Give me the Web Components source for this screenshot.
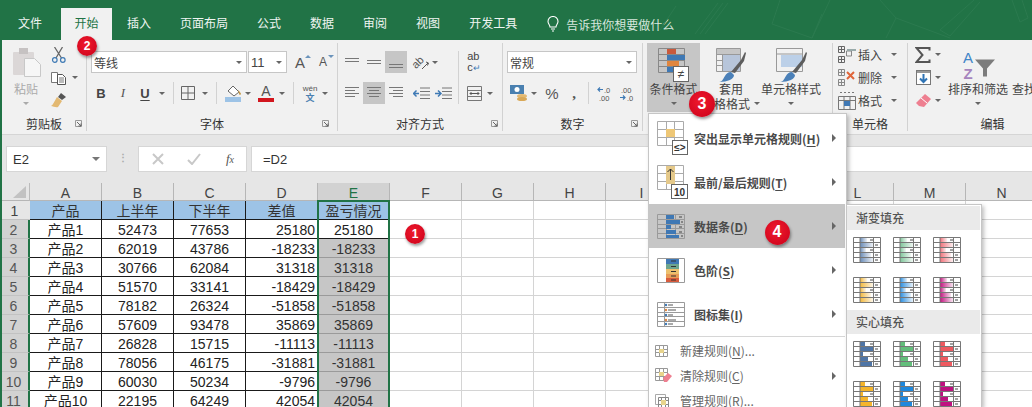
<!DOCTYPE html>
<html lang="zh"><head><meta charset="utf-8"><title>Excel</title>
<style>html,body{margin:0;padding:0;width:1032px;height:407px;overflow:hidden;background:#fff}</style>
</head><body>
<x-app></x-app>
<script>
const FONT='"Noto Sans CJK SC","Liberation Sans",sans-serif';
const svg=(w,h,b,vb)=>`<svg xmlns="http://www.w3.org/2000/svg" width="${w}" height="${h}" viewBox="${vb||`0 0 ${w} ${h}`}" style="display:block;flex:none">${b}</svg>`;
function grid(x,y,w,h,cols,rows,c){let d=`M${x} ${y}h${w}v${h}h${-w}z`;for(let i=1;i<cols;i++)d+=`M${x+Math.round(w*i/cols)} ${y}v${h}`;for(let i=1;i<rows;i++)d+=`M${x} ${y+Math.round(h*i/rows)}h${w}`;return `<path d="${d}" fill="none" stroke="${c}" stroke-width="1"/>`;}
const lines=(ys,x0s,x1s,c='#777')=>`<path d="${ys.map((y,i)=>`M${x0s[i]} ${y}H${x1s[i]}`).join('')}" stroke="${c}" fill="none"/>`;
const brush=(o)=>`<path d="M${o+12} 24l10-12 4-8 1 1-2 8-9 12z" fill="#5d5d5d"/><path d="M${o} 34c3 0 4-3 6-6 1-2 3-4 6-4l3 3c0 4-6 7-15 7z" fill="#4b80b8"/>`;
const I={
paste:svg(29,30,`<rect x="0" y="4" width="21" height="23" rx="1" fill="#dbd7d7"/><rect x="6" y="0" width="9" height="6" fill="#c6c2c2"/><path d="M11.5 10.5h10l6 6v12h-16z" fill="#f6f6f6" stroke="#c8c8c8"/>`),
cut:svg(16,16,`<path d="M3.5 0 10.5 11M11.5 0 5 11" stroke="#666" stroke-width="1.3" fill="none"/><circle cx="3.8" cy="13" r="2.3" fill="none" stroke="#3f7ab5" stroke-width="1.2"/><circle cx="11.8" cy="13" r="2.3" fill="none" stroke="#3f7ab5" stroke-width="1.2"/>`),
copy:svg(16,14,`<path d="M.5 1.5h6v10h-6z" fill="#fff" stroke="#777"/><path d="M6.5 3.5h5l3 3v7h-8z" fill="#fff" stroke="#555"/><path d="M8 7h5M8 9h5M8 11h5" stroke="#777"/>`),
painter:svg(16,15,`<path d="M10 0l5 4-4 3-4-3z" fill="#555"/><path d="M6 4l5 4-4 6c-2 1-5-1-7-1 2-1 3-4 6-9z" fill="#e3b972"/>`),
B:'<b style="font:bold 13px \'Liberation Sans\';color:#444">B</b>',
It:'<i style="font:italic 13px \'Liberation Serif\';color:#555">I</i>',
U:'<span style="font:bold 13px \'Liberation Sans\';color:#444;text-decoration:underline;text-underline-offset:2px">U</span>',
border:svg(14,14,`<path d="M.5.5h13v13H.5zM7 .5v13M.5 7h13" fill="none" stroke="#666"/>`),
fill:svg(17,18,`<path d="M3 7l5-5 6 6-5 4z" fill="#fff" stroke="#666"/><path d="M13 6c2 2 3 3 3 4s-2 1-2 0z" fill="#c59a49"/><rect x="0" y="13" width="16" height="5" fill="#9dc3e6"/>`),
fcolor:`<span style="display:block;width:16px;text-align:center;font:14px/14px 'Liberation Sans';color:#555;border-bottom:4px solid #d2161e">A</span>`,
wen:`<span style="display:block;text-align:center;font:8px/9px 'Liberation Sans';color:#555">wén<br><span style="font:bold 9px/9px 'Noto Sans CJK SC';color:#4a80b0">文</span></span>`,
grow:`<span style="font:15px 'Liberation Sans';color:#555;position:relative">A<span style="position:absolute;left:10px;top:1px;width:0;height:0;border:3px solid transparent;border-bottom:3px solid #6b93bb;border-top:0"></span></span>`,
shrink:`<span style="font:12px 'Liberation Sans';color:#555;position:relative">A<span style="position:absolute;left:9px;top:0;width:0;height:0;border:3px solid transparent;border-top:3px solid #6b93bb;border-bottom:0"></span></span>`,
aTop:svg(15,14,lines([3.5,6.5],[0,0],[14,14])),
aMid:svg(15,14,lines([5.5,8.5],[0,0],[14,14])),
aBot:svg(15,14,lines([9.5,12.5],[0,0],[14,14])),
aLeft:svg(15,14,lines([1.5,4.5,7.5,10.5],[0,0,0,0],[14,10,14,10])),
aCen:svg(15,14,lines([1.5,4.5,7.5,10.5],[0,2,0,2],[14,12,14,12])),
aRight:svg(15,14,lines([1.5,4.5,7.5,10.5],[0,4,0,4],[14,14,14,14])),
orient:svg(18,15,`<path d="M10 14l6-6M14 7l2.500 1-1 2.500" stroke="#555" fill="none"/><text x="0" y="11" font-family="Liberation Sans" font-size="11" fill="#555" transform="rotate(-45 6 8)">ab</text>`),
indL:svg(17,13,`<path d="M7 1h10M7 4.500h10M7 8h10M7 11.500h10" stroke="#777"/><path d="M6 6.500H1M3.500 3.500 .5 6.500l3 3" stroke="#3f7ab5" stroke-width="1.500" fill="none"/>`),
indR:svg(17,13,`<path d="M7 1h10M7 4.500h10M7 8h10M7 11.500h10" stroke="#777"/><path d="M0 6.500h5M3 3.500l3 3-3 3" stroke="#3f7ab5" stroke-width="1.500" fill="none"/>`),
wrap:`<span style="display:block;font:11px/11px 'Liberation Sans';color:#444">ab<br>c<span style="color:#3f7ab5;font-size:9px">↵</span></span>`,
merge:svg(15,15,`<path d="M.5.5h14v14H.5zM.5 4.500h14M.5 10.500h14" stroke="#777" fill="none"/><path d="M3 7.500h9M4.500 6 3 7.500 4.500 9M10.500 6 12 7.500 10.500 9" stroke="#555" fill="none"/>`),
currency:svg(17,17,`<rect x="0" y="0" width="14" height="9" fill="#4a80b0"/><circle cx="7" cy="4.500" r="2.500" fill="#fff"/><ellipse cx="12" cy="11" rx="5" ry="2" fill="#e3b972"/><ellipse cx="12" cy="14" rx="5" ry="2" fill="#d9a857"/>`),
pct:`<span style="font:15px 'Liberation Sans';color:#555">%</span>`,
comma:`<span style="font:bold 15px/14px 'Liberation Serif';color:#555">,</span>`,
incD:svg(15,15,`<path d="M6 3.500H1M3 1.500 1 3.500l2 2" stroke="#3f7ab5" stroke-width="1.200" fill="none"/><text x="7" y="7" font-family="Liberation Sans" font-size="7.500" fill="#555">.0</text><text x="2" y="14.500" font-family="Liberation Sans" font-size="7.500" fill="#555">.00</text>`),
decD:svg(15,15,`<text x="2" y="7" font-family="Liberation Sans" font-size="7.500" fill="#555">.00</text><path d="M1 11.500h5M4 9.500l2 2-2 2" stroke="#3f7ab5" stroke-width="1.200" fill="none"/><text x="8" y="14.500" font-family="Liberation Sans" font-size="7.500" fill="#555">.0</text>`),
cond:svg(31,34,`${grid(.5,.5,26,24,3,4,'#888')}<rect x="9" y="1" width="9" height="5" fill="#c9593c"/><rect x="9" y="7" width="18" height="5" fill="#3f78b4"/><rect x="9" y="13" width="12" height="5" fill="#e0863f"/><rect x="9" y="19" width="7" height="5" fill="#3f78b4"/><rect x="15.500" y="18.500" width="15" height="15" fill="#fff" stroke="#666"/><text x="23" y="30" text-anchor="middle" font-family="Liberation Sans" font-size="12" fill="#444">≠</text>`),
tblf:svg(30,34,`${grid(.5,.5,24,23,4,4,'#999')}<rect x="1" y="1" width="23" height="5" fill="#c6c6c6"/><rect x="7" y="7" width="17" height="16" fill="#b7c5da"/>`+brush(3)),
cellf:svg(31,34,`${grid(.5,.5,26,23,1,1,'#999')}<path d="M.5 6h26" stroke="#999"/><rect x="5" y="7" width="21" height="12" fill="#bcd0e8"/>`+brush(4)),
insert:svg(20,17,`${grid(.5,.5,6,6,2,2,'#666')}${grid(.5,10.500,6,6,2,2,'#666')}${grid(8.500,5,5,5,1,1,'#888')}<path d="M9 3h9v2H9z" fill="#9aa"/>`),
del:svg(20,17,`${grid(.5,.5,6,6,2,2,'#888')}${grid(.5,10.500,6,6,2,2,'#888')}<path d="M9 3l7 7M16 3l-7 7" stroke="#e0653a" stroke-width="2"/>`),
fmt:svg(18,18,`<path d="M.5 4.500h17v13H.5zM.5 8.500h17M6 4.500v13M12 4.500v13" stroke="#777" fill="none"/><path d="M2 .5h14" stroke="#777" stroke-dasharray="2 2"/><rect x="6" y="9" width="6" height="5" fill="#3f78b4"/>`),
sigma:svg(16,16,`<path d="M14.500 3.500V1H1.500l6 7-6 7h13v-2.500" fill="none" stroke="#555" stroke-width="2"/>`),
fillD:svg(15,15,`<rect x=".5" y=".5" width="14" height="14" fill="#fff" stroke="#777"/><rect x="1" y="1" width="13" height="2" fill="#999"/><path d="M7.500 4v8M4 8.500l3.500 3.500 3.500-3.500" stroke="#2f74b5" stroke-width="2" fill="none"/>`),
eraser:svg(15,13,`<path d="M9 0l6 5-7 8-5-1-3-3z" fill="#ee7f90"/><path d="M5 4l6 5" stroke="#fff"/>`),
sort:svg(38,33,`<text x="9" y="14" text-anchor="middle" font-family="Liberation Sans" font-size="15" fill="#3f86c8">A</text><text x="9" y="30" text-anchor="middle" font-family="Liberation Sans" font-weight="bold" font-size="15" fill="#a684bd">Z</text><path d="M16 11h20l-8 9v8h-4v-8z" fill="#7c7c7c"/>`),
find:svg(20,34,`<circle cx="11" cy="30" r="6" fill="#3f78b4"/>`),
x:svg(12,12,`<path d="M1 1l10 10M11 1 1 11" stroke="#c8c8c8" stroke-width="2"/>`),
check:svg(14,12,`<path d="M1 7l4 4 8-10" stroke="#c8c8c8" stroke-width="2" fill="none"/>`),
lamp:svg(12,16,`<path d="M3 11c0-2-2-3-2-5.500a5 5 0 0 1 10 0c0 2.500-2 3.500-2 5.500zM4 13h4M5 15h2" fill="none" stroke="#fff" stroke-width="1.100"/>`),
launch:svg(7,7,`<path d="M.5.5h6v6h-6z" fill="none" stroke="#999"/><path d="M2 2l4 4M6 3.500V6H3.500" stroke="#666" fill="none"/>`),
m1:svg(31,34,`${grid(.5,.5,26,24,3,3,'#aaa')}<rect x="9" y="8" width="9" height="8" fill="#eec776"/><rect x="15.500" y="19.500" width="15" height="14" fill="#fff" stroke="#666"/><text x="23" y="30" text-anchor="middle" font-family="Liberation Sans" font-size="10" fill="#333">≤&gt;</text>`),
m2:svg(31,34,`${grid(.5,.5,26,24,3,3,'#aaa')}<rect x="9" y="1" width="9" height="18" fill="#e5c98a"/><path d="M13.500 15V4M10.500 7l3-3 3 3" stroke="#333" fill="none"/><rect x="14.500" y="19.500" width="16" height="14" fill="#fff" stroke="#666"/><text x="22.500" y="30.500" text-anchor="middle" font-family="Liberation Sans" font-size="10" fill="#333">10</text>`),
m3:svg(28,25,`${grid(.5,.5,27,24,3,5,'#9a9a9a')}<rect x="9" y="1" width="8" height="4" fill="#3f78b4"/><rect x="9" y="6" width="14" height="4" fill="#3f78b4"/><rect x="9" y="11" width="5" height="4" fill="#3f78b4"/><rect x="9" y="16" width="10" height="4" fill="#3f78b4"/><rect x="9" y="21" width="13" height="3" fill="#3f78b4"/><path d="M22 3h3M24 8h2M22 13h3M22 18h3M24 22h2" stroke="#444"/>`),
m4:svg(28,25,`<path d="M.5.5h27v24H.5zM9.500.5v24M21.500.5v24" fill="none" stroke="#9a9a9a"/><rect x="9" y="1" width="13" height="5" fill="#3f78b4"/><rect x="9" y="6" width="13" height="5" fill="#6ea58e"/><rect x="9" y="11" width="13" height="5" fill="#ecc06e"/><rect x="9" y="16" width="13" height="4" fill="#e89c57"/><rect x="9" y="20" width="13" height="4" fill="#d95c3e"/><path d="M14 3h5M14 8.500h5M14 13.500h5M14 18h5M14 22h5" stroke="#333"/>`),
m5:svg(28,25,`${grid(.5,.5,27,24,1,5,'#9a9a9a')}<path d="M7.500.5v24" stroke="#9a9a9a"/><path d="M11 3h5M11 8h8M11 13h5M11 18h8M11 22h5" stroke="#555"/><circle cx="9" cy="3" r="1.200" fill="#3f78b4"/><circle cx="9" cy="8" r="1.200" fill="#e0863f"/><circle cx="9" cy="13" r="1.200" fill="#3f78b4"/><circle cx="9" cy="18" r="1.200" fill="#e0863f"/><circle cx="9" cy="22" r="1.200" fill="#3f78b4"/>`),
s1:svg(13,12,`${grid(.5,.5,12,11,3,3,'#999')}<rect x="4" y="4" width="5" height="4" fill="#e8d48c"/>`),
s2:svg(17,15,`${grid(.5,.5,12,12,3,3,'#999')}<rect x="4" y="4" width="5" height="4" fill="#e8d48c"/><path d="M8 10l5-5 4 3-5 6H9z" fill="#ee7f90"/>`),
s3:svg(14,14,`<path d="M.5.5h10v10H.5z" fill="none" stroke="#aaa"/>${grid(3.500,3.500,10,10,3,3,'#888')}<rect x="6" y="6" width="5" height="5" fill="#e8d48c"/>`),
};
let gid=0;
function dataBar(c,kind){const id='g'+(++gid),W=[5,14,3,8,12];
let d=kind==='g'?`<defs><linearGradient id="${id}"><stop offset="0" stop-color="${c}"/><stop offset="1" stop-color="${c}" stop-opacity=".12"/></linearGradient></defs>`:'';
W.forEach((w,i)=>{d+=`<rect x="7" y="${1+i*5}" width="${kind==='g'?[7,13,6,11,13][i]:w}" height="4" fill="${kind==='g'?`url(#${id})`:c}"/>`});
d+=`<path d="M.5.5h27v25H.5zM.5 5.500h27M.5 10.500h27M.5 15.500h27M.5 20.500h27M7 .5v25M20.500.5v25" fill="none" stroke="#777"/><path d="M17 3h3M22 8h3M17 13h3M22 18h3M22 23h3" stroke="#444"/>`;
return svg(28,26,d);}

class XBadge extends HTMLElement{constructor(){super();const s=+this.getAttribute('size')||20;
const r=this.attachShadow({mode:'open'});
r.innerHTML=`<style>:host{position:absolute;left:${this.getAttribute('cx')-s/2}px;top:${this.getAttribute('cy')-s/2}px;width:${s}px;height:${s}px;display:flex;align-items:center;justify-content:center;border-radius:50%;background:radial-gradient(circle at 45% 40%,#f01a2d,#c9001a);box-shadow:1px 2px 3px rgba(0,0,0,.4);color:#fff;font:bold ${Math.round(s*.62)}px/1 "Liberation Sans",sans-serif;z-index:9}</style><slot></slot>`;}}
customElements.define('x-badge',XBadge);

class XTabs extends HTMLElement{constructor(){super();const r=this.attachShadow({mode:'open'});
const tabs=['文件','开始','插入','页面布局','公式','数据','审阅','视图','开发工具'];
r.innerHTML=`<style>:host{display:flex;height:40px;background:#217346;padding-left:4px;box-sizing:border-box;position:relative;overflow:hidden;font:12px ${FONT};color:#fff}
.t{padding:8px 14px 0;margin-right:1px;line-height:30px;height:40px;box-sizing:border-box;color:#f0f5f2}
.t.a{background:#f1f1f1;color:#217346;margin:8px 1px 0 4px;padding:0 13.5px;height:32px}
.tell{display:flex;align-items:center;gap:7px;margin-left:15px;padding-top:8px;height:32px;color:#d7e6dd}
.doodle{position:absolute;left:640px;top:0}</style>
${tabs.map((t,i)=>`<div class="t${i==1?' a':''}">${t}</div>`).join('')}
<div class="tell">${I.lamp}<span>告诉我你想要做什么</span></div>
<svg class="doodle" width="392" height="40" viewBox="0 0 392 40" fill="none" stroke="#2b7a4f" stroke-width="1"><path d="M55 34 78 3M60 34 83 3M65 34 88 3M140 0l-8 24 40 14 10-24M172 38l18-38M240 0l16 18 54 20M256 18l-10 20M300 30l34-30M310 36l30-34M300 30l10 6M372 0l8 22 8-4-6-18M20 30 36 6"/></svg>`;}}
customElements.define('x-tabs',XTabs);

class XGroup extends HTMLElement{constructor(){super();const r=this.attachShadow({mode:'open'});
const w=this.getAttribute('w'),nl=this.hasAttribute('nolaunch'),pad=this.getAttribute('lr')||4;
r.innerHTML=`<style>:host{display:block;flex:none;width:${w}px;height:94px;padding-top:3px;box-sizing:border-box;font:12px ${FONT};color:#444}
.in{height:88px;border-right:1px solid #d2d2d2;box-sizing:border-box;display:flex;flex-direction:column}
.c{height:71px;flex:none}.l{height:17px;line-height:20px;display:grid;grid-template-columns:1fr auto 1fr;flex:none}
.l span{grid-column:2;color:#333}.l i{grid-column:3;justify-self:end;margin:${6}px ${pad}px 0 0;display:block}</style>
<div class="in"><div class="c"><slot></slot></div><div class="l"><span>${this.getAttribute('label')}</span>${nl?'':`<i>${I.launch}</i>`}</div></div>`;}}
customElements.define('x-group',XGroup);

const b=(n,w=22,cls='')=>`<span class="b ${cls}" style="width:${w}px">${I[n]||n}</span>`;
const c=(w=12)=>`<span class="b" style="width:${w}px"><span class="car"></span></span>`;
const sep=(l,r,h=22)=>`<span class="sep" style="margin:0 ${r}px 0 ${l}px;height:${h}px"></span>`;
const sp=w=>`<span style="width:${w}px;flex:none"></span>`;
const line=(icon,label,w)=>`<div class="sm" ><span class="smi">${I[icon]}</span><span class="smt">${label}</span><span class="car"></span></div>`;
class XRibbon extends HTMLElement{constructor(){super();const r=this.attachShadow({mode:'open'});
r.innerHTML=`<style>:host{display:flex;height:95px;background:#f1f1f1;border-bottom:1px solid #d5d5d5;box-sizing:border-box;font:12px ${FONT};color:#444;overflow:hidden}
.row{display:flex;align-items:center;height:22px}.r1{margin-top:8px}.r2{margin-top:9px}
.b{display:flex;align-items:center;justify-content:center;height:22px;flex:none}
.on{background:#c6c6c6}
.car{display:block;width:0;height:0;border:3px solid transparent;border-top:3px solid #666;border-bottom:0;flex:none}
.sep{display:block;width:1px;background:#d2d2d2;flex:none;align-self:flex-start}
.cb{height:22px;background:#fff;border:1px solid #c6c6c6;box-sizing:border-box;display:flex;align-items:center;padding:0 4px 0 2px;justify-content:space-between;color:#444;flex:none}
.clip{display:flex;height:71px}
.pc{width:48px;display:flex;flex-direction:column;align-items:center;flex:none;padding-top:5px;color:#aaa;box-sizing:border-box}
.pc>svg{margin-left:3px}.pc div{line-height:16px;margin-top:3px}.pc .car{margin-top:5px;border-top-color:#aaa}
.col{display:flex;flex-direction:column}.col .row{height:23px}
.big{display:flex;flex-direction:column;align-items:center;height:69px;padding-top:5px;box-sizing:border-box;flex:none;line-height:15px;white-space:nowrap}
.big svg{height:34px;margin-bottom:-1px}.big .car{margin-top:6px}.big .t2{display:flex;align-items:center;gap:4px}.big .t2 .car{margin:0}
.act{background:#c6c6c6}
.sm{display:flex;align-items:center;height:23px;margin-left:5px}.smi{width:20px;display:flex}.smt{margin-right:auto}.sm .car{margin-right:10px}
.cells{padding-top:0;display:flex;flex-direction:column}</style>
<x-group w="85" label="剪贴板" lr="4"><div class="clip"><div class="pc">${I.paste}<div>粘贴</div><span class="car"></span></div>
<div class="col"><div class="row">${b('cut',18)}</div><div class="row">${b('copy',18)}${c(14)}</div><div class="row">${b('painter',18)}</div></div></div></x-group>
<x-group w="251" label="字体" lr="8">
<div class="row r1">${sp(4)}<div class="cb" style="width:156px"><span>等线</span><span class="car"></span></div>${sp(1)}<div class="cb" style="width:39px;font-family:'Liberation Sans'"><span style="font-size:13px">11</span><span class="car"></span></div>${sp(2)}${b('grow')}${sp(1)}${b('shrink')}</div>
<div class="row r2">${sp(3)}${b('B')}${b('It')}${b('U')}${c(12)}${sep(5,3)}${b('border')}${c(12)}${sep(5,5)}${b('fill')}${c(8)}${sp(3)}${b('fcolor')}${c(10)}${sep(6,5)}${b('wen')}${c(8)}</div></x-group>
<x-group w="165" label="对齐方式" lr="4">
<div class="row r1">${sp(3)}${b('aTop')}${b('aMid')}${b('aBot',22,'on')}${sp(3)}${b('orient')}${c(6)}${sep(20,4,53)}${b('wrap')}</div>
<div class="row r2">${sp(3)}${b('aLeft')}${b('aCen',22,'on')}${b('aRight')}${sp(3)}${b('indL')}${b('indR')}${sp(9)}${b('merge')}${c(10)}</div></x-group>
<x-group w="140" label="数字" lr="4">
<div class="row r1">${sp(4)}<div class="cb" style="width:130px"><span>常规</span><span class="car"></span></div></div>
<div class="row r2">${sp(4)}${b('currency')}${c(10)}${sp(2)}${b('pct')}${b('comma')}${sep(3,4)}${b('incD')}${b('decD')}</div></x-group>
<x-group w="190" label=" " nolaunch>
<div style="display:flex"><div style="width:4px"></div>
<div class="big act" style="width:53px">${I.cond}<span>条件格式</span><span class="car"></span></div>${sp(5)}
<div class="big" style="width:52px">${I.tblf}<span>套用</span><span class="t2">表格格式<span class="car"></span></span></div>${sp(4)}
<div class="big" style="width:60px">${I.cellf}<span>单元格样式</span><span class="car"></span></div></div></x-group>
<x-group w="75" label="单元格" nolaunch><div class="cells">${line('insert','插入')}${line('del','删除')}${line('fmt','格式')}</div></x-group>
<x-group w="170" label="编辑" nolaunch><div style="display:flex">
<div class="col" style="width:39px;flex:none;padding-left:7px;box-sizing:border-box">
<div class="row">${b('sigma',16)}${c(14)}</div><div class="row">${b('fillD',16)}${c(14)}</div><div class="row">${b('eraser',16)}${c(14)}</div></div>
<div class="big" style="width:62px">${I.sort}<span>排序和筛选</span><span class="car"></span></div>${sp(3)}
<div class="big" style="width:60px">${I.find}<span>查找和选择</span><span class="car"></span></div></div></x-group>`;}}
customElements.define('x-ribbon',XRibbon);

class XFormula extends HTMLElement{constructor(){super();const r=this.attachShadow({mode:'open'});
r.innerHTML=`<style>:host{display:flex;height:48px;background:#e6e6e6;align-items:flex-start;padding:11px 0 0 4px;box-sizing:border-box;font:13px "Liberation Sans","Noto Sans CJK SC",sans-serif;color:#333;overflow:hidden}
.box{height:26px;background:#fff;border:1px solid #d6d6d6;box-sizing:border-box;display:flex;align-items:center;flex:none}
.car{width:0;height:0;border:4px solid transparent;border-top:4px solid #777;border-bottom:0;margin-left:auto;margin-right:6px}
.dots{width:31px;flex:none;text-align:center;line-height:24px;color:#aaa;font-weight:bold;font-size:10px;letter-spacing:0}
.ic{width:36px;display:flex;justify-content:center;flex:none}</style>
<div class="box" style="width:101px;padding-left:6px">E2<span class="car"></span></div>
<div class="dots">⋮</div>
<div class="box" style="width:109px;padding-left:1px"><span class="ic">${I.x}</span><span class="ic">${I.check}</span><span class="ic"><i style="font:italic 13px 'Liberation Serif';color:#555">f<small style="font-size:10px">x</small></i></span></div>
<div class="box" style="margin-left:4px;width:790px;padding-left:11px">=D2</div>`;}}
customElements.define('x-formula',XFormula);

class XSheet extends HTMLElement{constructor(){super();const r=this.attachShadow({mode:'open'});
const rows=[['产品','上半年','下半年','差值','盈亏情况'],['产品1',52473,77653,25180,25180],['产品2',62019,43786,-18233,-18233],['产品3',30766,62084,31318,31318],['产品4',51570,33141,-18429,-18429],['产品5',78182,26324,-51858,-51858],['产品6',57609,93478,35869,35869],['产品7',26828,15715,-11113,-11113],['产品8',78056,46175,-31881,-31881],['产品9',60030,50234,-9796,-9796],['产品10',22195,64249,42054,42054]];
const letters='ABCDEFGHIJKLMN'.split('');
let h=`<div class="ch corner"><svg width="13" height="12" viewBox="0 0 13 12"><path d="M13 0v12H0z" fill="#c2c2c2"/></svg></div>`;
letters.forEach((l,i)=>h+=`<div class="ch${i==4?' sel':''}">${l=='J'||l=='K'?'':l}</div>`);
for(let ri=0;ri<12;ri++){const d=rows[ri];
 h+=`<div class="rh${ri>0&&ri<11?' on':''}">${ri+1}</div>`;
 letters.forEach((l,i)=>{let cl='cell',v='';
  if(d&&i<5){v=d[i];cl+=' bd';if(ri==0)cl+=' head';else if(i==3)cl+=' rt';if(i==4&&ri>1)cl+=' gr';}
  h+=`<div class="${cl}">${v}</div>`;});}
r.innerHTML=`<style>:host{display:block;position:relative;flex:1;min-height:0;overflow:hidden;background:#fff;font:14px "Liberation Sans","Noto Sans CJK SC",sans-serif;color:#222}
.g{display:grid;grid-template-columns:28px repeat(14,72px);grid-template-rows:18px repeat(12,19px)}
.ch{background:#e6e6e6;border-right:1px solid #b6b6b6;border-bottom:1px solid #b6b6b6;box-sizing:border-box;text-align:center;line-height:21px;color:#444}
.corner{display:flex;justify-content:flex-end;align-items:flex-end;padding:0 3px 2px 0;border-right:1px solid #bbb}
.ch.sel{background:#d2d2d2;color:#217346}
.rh{background:#e6e6e6;border-bottom:1px solid #c2c2c2;box-sizing:border-box;text-align:center;line-height:21px;color:#444;padding-right:3px}
.rh.on{background:#d2d2d2;border-right:2px solid #217346;color:#555}
.cell{border-right:1px solid #d4d4d4;border-bottom:1px solid #d4d4d4;box-sizing:border-box;line-height:21px;text-align:center;white-space:nowrap;overflow:hidden}
.bd{border-color:#1a1a1a}.head{background:#9dc3e6;color:#333;line-height:20px}.rt{text-align:right;padding-right:2px}
.gr{background:#c6c6c6;border-bottom-color:#9a9a9a;color:#333}
.s{position:absolute;left:315px;top:17px;width:73px;height:260px;border:2px solid #217346;box-sizing:border-box;pointer-events:none}</style>
<div class="g">${h}</div><div class="s"></div>`;}}
customElements.define('x-sheet',XSheet);

class XItem extends HTMLElement{constructor(){super();const r=this.attachShadow({mode:'open'});
const big=this.hasAttribute('big'),arrow=this.hasAttribute('arrow'),hot=this.hasAttribute('hot');
r.innerHTML=`<style>:host{display:flex;align-items:center;height:${big?44:25}px;flex:none;position:relative;background:${hot?'#c6c6c6':'transparent'};box-sizing:border-box;color:${big?'#4a4a4a':'#666'};font:${big?700:400} 12px ${FONT};padding-left:${big?8:6}px}
.i{width:${big?37:25}px;flex:none;display:flex}
.a{margin-left:auto;margin-right:9px;width:0;height:0;border:4px solid transparent;border-left:4px solid #666;border-right:0}</style>
<span class="i"><slot name="i"></slot></span><span><slot></slot></span>${arrow?'<span class="a"></span>':''}`;}}
customElements.define('x-item',XItem);

class XMenu extends HTMLElement{constructor(){super();const r=this.attachShadow({mode:'open'});
const it=(ic,t,k,at,suf='')=>`<x-item ${at}><span slot="i">${I[ic]}</span>${t}(<u style="text-decoration:underline;text-underline-offset:2px">${k}</u>)${suf}</x-item>`;
r.innerHTML=`<style>:host{position:absolute;left:648px;top:113px;width:199px;height:294px;background:#fff;border:1px solid #c6c6c6;border-bottom:0;box-sizing:border-box;box-shadow:2px 2px 4px rgba(0,0,0,.25);padding:2px 1px 0 0;display:flex;flex-direction:column;overflow:hidden;z-index:5}
hr{height:1px;border:0;background:#d6d6d6;margin:0;flex:none}</style>
${it('m1','突出显示单元格规则','H','big arrow')}${it('m2','最前/最后规则','T','big arrow')}
${it('m3','数据条','D','big arrow hot')}${it('m4','色阶','S','big arrow')}${it('m5','图标集','I','big arrow')}
<hr style="margin-top:0"><div style="height:1px;flex:none"></div>
${it('s1','新建规则','N','','...')}${it('s2','清除规则','C','arrow')}${it('s3','管理规则','R','','...')}`;}}
customElements.define('x-menu',XMenu);

class XSub extends HTMLElement{constructor(){super();const r=this.attachShadow({mode:'open'});
const cg=['#6a8cb8','#7fc59a','#f0727a','#f2b83c','#2a8ee0','#c2157f'],cs=['#4f75a6','#63be7b','#ee5a60','#f5b52c','#1f88dd','#bf1080'];
const row=(a,k)=>`<div class="rw">${a.map(x=>dataBar(x,k)).join('')}</div>`;
r.innerHTML=`<style>:host{position:absolute;left:846px;top:204px;width:136px;height:203px;background:#fff;border:1px solid #c6c6c6;border-bottom:0;box-sizing:border-box;box-shadow:2px 2px 4px rgba(0,0,0,.25);padding:1px 1px 0 0;overflow:hidden;z-index:6;font:500 12px ${FONT};color:#555}
.h{height:24px;line-height:24px;background:#eaeaea;padding-left:9px;margin-bottom:7px}
.rw{display:flex;gap:12px;padding-left:6px;margin-bottom:14px}.rw:last-of-type{margin-bottom:0}
.sec{padding-bottom:7px}</style>
<div class="sec"><div class="h">渐变填充</div>${row(cg.slice(0,3),'g')}${row(cg.slice(3),'g')}</div>
<div class="sec"><div class="h">实心填充</div>${row(cs.slice(0,3),'s')}${row(cs.slice(3),'s')}</div>`;}}
customElements.define('x-submenu',XSub);

class XApp extends HTMLElement{constructor(){super();const r=this.attachShadow({mode:'open'});
r.innerHTML=`<style>:host{display:flex;flex-direction:column;position:relative;width:1032px;height:407px;overflow:hidden}
.m{flex:1;min-height:0;display:flex;flex-direction:column;border-left:2px solid #217346}</style>
<x-tabs></x-tabs><div class="m"><x-ribbon></x-ribbon><x-formula></x-formula><x-sheet></x-sheet></div>
<x-menu></x-menu><x-submenu></x-submenu>
<x-badge cx="87" cy="46" size="20">2</x-badge><x-badge cx="415" cy="234" size="20">1</x-badge><x-badge cx="702" cy="104" size="26">3</x-badge><x-badge cx="777" cy="232" size="25">4</x-badge>`;}}
customElements.define('x-app',XApp);
</script>
</body></html>
